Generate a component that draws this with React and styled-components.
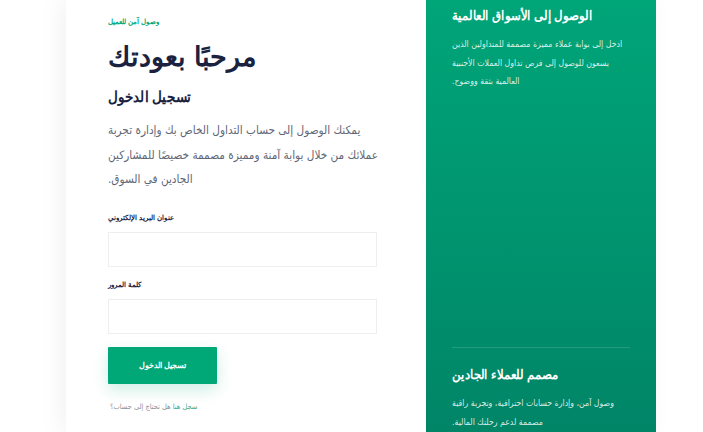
import styled, { createGlobalStyle, css } from 'styled-components'

const GlobalStyle = createGlobalStyle`
  html, body {
    margin: 0;
    height: 100%;
    overflow: hidden;
  }
  body {
    background: #ffffff;
    font-family: "DejaVu Sans Condensed", "Liberation Sans", sans-serif;
  }
`

const heavy = css`
  font-family: "Liberation Sans", Arial, sans-serif;
  font-weight: 700;
`

const arabicLeft = css`
  direction: rtl;
  text-align: left;
`

// the fallback arabic face is wider than the one in the design
const narrowed = css`
  transform: scaleX(0.9);
  transform-origin: left center;
`

const Page = styled.div`
  height: 432px;
  overflow: hidden;
  display: flex;
  padding-left: 66px;
  background: #ffffff;
`

const Shell = styled.div`
  display: flex;
  width: 590px;
  height: 432px;
  background: #ffffff;
  box-shadow: -6px 0 22px rgba(20, 27, 60, 0.05);
`

const FormSide = styled.main`
  width: 360px;
  box-sizing: border-box;
  padding: 15px 49px 0 42px;
`

const Eyebrow = styled.div`
  ${arabicLeft};
  ${heavy};
  color: #00a878;
  font-size: 7px;
  line-height: 14px;
`

const Title = styled.h1`
  ${arabicLeft};
  ${heavy};
  margin: 6px 0 0;
  color: #1a2240;
  font-size: 27px;
  line-height: 44px;
`

const Subtitle = styled.h2`
  ${arabicLeft};
  ${heavy};
  ${narrowed};
  margin: 5px 0 0;
  color: #1a2240;
  font-size: 15px;
  line-height: 26px;
`

const Lead = styled.p`
  ${arabicLeft};
  margin: 8px -6px 0 0;
  color: #5f6675;
  font-size: 11.7px;
  line-height: 24.5px;
`

const Form = styled.form`
  margin-top: 20px;
  display: flex;
  flex-direction: column;
`

const Label = styled.label`
  ${arabicLeft};
  ${heavy};
  color: #1a2240;
  font-size: 7px;
  line-height: 12px;
`

const Input = styled.input`
  box-sizing: border-box;
  height: 35px;
  margin: 8px 0 12px;
  border: 1px solid #eceef0;
  background: #ffffff;
  outline: none;
`

const Submit = styled.button`
  ${heavy};
  align-self: flex-start;
  width: 109px;
  height: 37px;
  margin-top: 1px;
  border: 0;
  border-radius: 1px;
  background: #00a878;
  box-shadow: 0 6px 16px rgba(0, 168, 120, 0.2);
  color: #ffffff;
  font-size: 8px;
  direction: rtl;
`

const Hint = styled.p`
  ${arabicLeft};
  margin: 17px 0 0 2px;
  color: #8a909c;
  font-size: 7.4px;
  line-height: 12px;
`

const HintLink = styled.a`
  color: #3fa98a;
`

const Aside = styled.aside`
  width: 230px;
  box-sizing: border-box;
  padding: 6px 26px 0;
  display: flex;
  flex-direction: column;
  justify-content: space-between;
  background: linear-gradient(180deg, #00a578 0, #008567 100%);
  color: #ffffff;
`

const Block = styled.section`
  ${arabicLeft};
`

const LastBlock = styled(Block)`
  border-top: 1px solid rgba(255, 255, 255, 0.14);
  padding: 17px 0 1px;
`

const BlockTitle = styled.h3`
  ${heavy};
  ${narrowed};
  margin: 0;
  font-size: 13px;
  line-height: 20px;
`

const BlockText = styled.p`
  margin: 9px 0 0;
  color: rgba(255, 255, 255, 0.85);
  font-size: 8.7px;
  line-height: 18.5px;
`

export default function App() {
  return (
    <>
      <GlobalStyle />
      <Page>
        <Shell>
          <FormSide>
            <Eyebrow>وصول آمن للعميل</Eyebrow>
            <Title>مرحبًا بعودتك</Title>
            <Subtitle>تسجيل الدخول</Subtitle>
            <Lead>
              يمكنك الوصول إلى حساب التداول الخاص بك وإدارة تجربة عملائك من خلال بوابة آمنة
              ومميزة مصممة خصيصًا للمشاركين الجادين في السوق.
            </Lead>
            <Form>
              <Label>عنوان البريد الإلكتروني</Label>
              <Input type="email" />
              <Label>كلمة المرور</Label>
              <Input type="password" />
              <Submit type="button">تسجيل الدخول</Submit>
              <Hint>
                <HintLink>سجل هنا</HintLink> هل تحتاج إلى حساب؟
              </Hint>
            </Form>
          </FormSide>
          <Aside>
            <Block>
              <BlockTitle>الوصول إلى الأسواق العالمية</BlockTitle>
              <BlockText>
                ادخل إلى بوابة عملاء مميزة مصممة للمتداولين الذين يسعون للوصول إلى فرص تداول
                العملات الأجنبية العالمية بثقة ووضوح.
              </BlockText>
            </Block>
            <LastBlock>
              <BlockTitle>مصمم للعملاء الجادين</BlockTitle>
              <BlockText>
                وصول آمن، وإدارة حسابات احترافية، وتجربة راقية مصممة لدعم رحلتك المالية.
              </BlockText>
            </LastBlock>
          </Aside>
        </Shell>
      </Page>
    </>
  )
}
